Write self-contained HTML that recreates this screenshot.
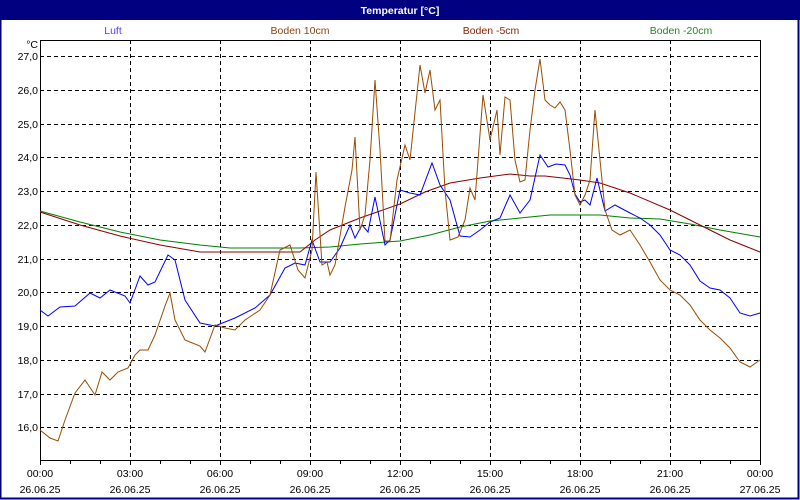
<!DOCTYPE html>
<html><head><meta charset="utf-8"><style>
html,body{margin:0;padding:0;background:#fff}
svg{display:block}
text{font-family:"Liberation Sans",sans-serif;font-size:10.5px}
</style></head><body>
<svg width="800" height="500" viewBox="0 0 800 500" xmlns="http://www.w3.org/2000/svg">
<rect x="0" y="0" width="800" height="500" fill="#fff"/>
<rect x="0" y="0" width="800" height="20" fill="#000080"/>
<rect x="0.5" y="0.5" width="798" height="498" fill="none" stroke="#000080" stroke-width="2"/>
<text x="400" y="14" fill="#fff" font-weight="bold" text-anchor="middle" style="font-size:10.5px">Temperatur [°C]</text>
<text x="113" y="34" fill="#5a3cff" text-anchor="middle">Luft</text>
<text x="300" y="34" fill="#8b4513" text-anchor="middle">Boden 10cm</text>
<text x="491" y="34" fill="#8b2500" text-anchor="middle">Boden -5cm</text>
<text x="681" y="34" fill="#228b22" text-anchor="middle">Boden -20cm</text>
<g stroke="#000" stroke-width="1" stroke-dasharray="4,3" fill="none">
<path d="M40 56.5H760M40 90.5H760M40 124.5H760M40 157.5H760M40 191.5H760M40 225.5H760M40 259.5H760M40 292.5H760M40 326.5H760M40 360.5H760M40 394.5H760M40 427.5H760"/>
<path d="M130.5 40V460M220.5 40V460M310.5 40V460M400.5 40V460M490.5 40V460M580.5 40V460M670.5 40V460"/>
</g>
<rect x="40.5" y="40.5" width="720" height="420" fill="none" stroke="#000"/>
<g stroke="#000"><path d="M40.5 461v4M70.5 461v3M100.5 461v3M130.5 461v4M160.5 461v3M190.5 461v3M220.5 461v4M250.5 461v3M280.5 461v3M310.5 461v4M340.5 461v3M370.5 461v3M400.5 461v4M430.5 461v3M460.5 461v3M490.5 461v4M520.5 461v3M550.5 461v3M580.5 461v4M610.5 461v3M640.5 461v3M670.5 461v4M700.5 461v3M730.5 461v3M760.5 461v4"/></g>
<g text-anchor="end" fill="#000">
<text x="38" y="48">°C</text>
<text x="38" y="60">27,0</text><text x="38" y="94">26,0</text><text x="38" y="128">25,0</text><text x="38" y="161">24,0</text><text x="38" y="195">23,0</text><text x="38" y="229">22,0</text><text x="38" y="263">21,0</text><text x="38" y="296">20,0</text><text x="38" y="330">19,0</text><text x="38" y="364">18,0</text><text x="38" y="398">17,0</text><text x="38" y="431">16,0</text>
</g>
<g text-anchor="middle" fill="#000">
<text x="40" y="477">00:00</text><text x="130" y="477">03:00</text><text x="220" y="477">06:00</text><text x="310" y="477">09:00</text><text x="400" y="477">12:00</text><text x="490" y="477">15:00</text><text x="580" y="477">18:00</text><text x="670" y="477">21:00</text><text x="760" y="477">00:00</text>
<text x="40" y="493">26.06.25</text><text x="130" y="493">26.06.25</text><text x="220" y="493">26.06.25</text><text x="310" y="493">26.06.25</text><text x="400" y="493">26.06.25</text><text x="490" y="493">26.06.25</text><text x="580" y="493">26.06.25</text><text x="670" y="493">26.06.25</text><text x="760" y="493">27.06.25</text>
</g>
<g fill="none" stroke-width="1">
<polyline stroke="#008000" points="40,211 80,222 120,232 160,240 200,245 230,248 300,248 330,247 360,244 400,241 430,235 460,227 490,221 520,218 550,215 600,215 630,218 660,219 690,224 720,230 760,237"/>
<polyline stroke="#8b0000" points="40,212 80,225 120,236 160,245 200,252 300,252 315,240 330,230 360,218 400,204 425,192 450,183 480,178 510,174 530,176 545,176 580,180 600,183 630,193 670,210 700,225 730,240 760,252"/>
<polyline stroke="#0000ff" points="40,310 48,316 60,307 75,306 90,293 100,298 110,290 125,296 130,303 140,276 148,285 155,282 168,255 175,260 185,300 200,323 215,326 235,318 255,308 270,295 285,268 295,263 305,265 312,240 320,262 330,262 340,248 350,225 355,238 362,225 368,232 375,197 385,245 390,240 400,190 410,193 420,195 432,163 440,185 450,200 460,236 470,237 480,230 490,222 500,218 510,195 520,213 530,200 540,155 548,167 556,164 565,165 570,175 575,194 580,202 585,200 590,205 597,178 605,211 615,205 630,213 640,218 650,225 660,235 670,250 680,255 690,265 700,281 710,288 720,290 730,298 740,313 750,316 760,313"/>
<polyline stroke="#994c00" points="40,430 50,438 58,441 65,420 75,393 85,380 95,395 102,372 110,380 118,372 128,368 135,355 140,350 148,350 155,335 165,306 170,293 175,320 185,340 200,346 205,352 215,325 225,328 235,330 245,320 260,310 270,295 280,250 290,245 298,270 305,278 312,250 316,172 322,265 327,262 330,275 335,265 345,207 352,170 355,137 360,230 365,215 370,160 375,80 380,150 385,241 390,241 397,180 405,145 410,160 420,65 425,93 430,70 435,110 440,100 445,190 450,240 458,237 465,220 470,188 475,200 483,95 490,140 497,110 500,155 505,97 510,100 515,160 520,182 525,180 530,130 535,90 540,59 545,100 550,105 555,108 560,102 565,110 570,150 575,195 580,205 585,195 590,180 595,110 600,160 605,210 612,230 620,235 630,230 640,245 650,262 660,280 670,290 680,295 690,305 700,320 710,330 720,338 730,348 740,362 750,367 760,360"/>
</g>
</svg>
</body></html>
